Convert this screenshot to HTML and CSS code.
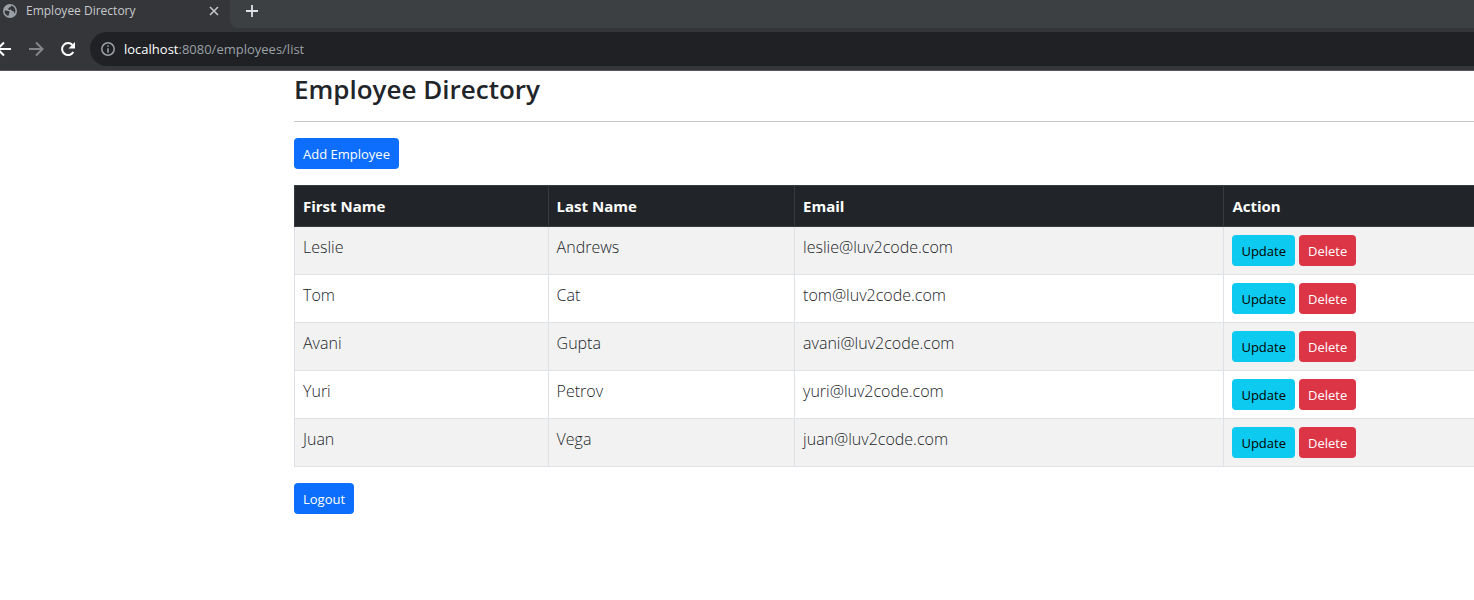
FILE: index.html
```html
<!DOCTYPE html>
<html lang="en">
<head>
<meta charset="utf-8">
<meta name="viewport" content="width=device-width, initial-scale=1">
<title>Employee Directory</title>
<link rel="stylesheet" href="styles.css">
</head>
<body>
<header class="browser">
  <div class="tabstrip">
    <div class="tab">
      <svg class="favicon" width="14" height="14" viewBox="0 0 14 14" aria-hidden="true"><circle cx="7" cy="7" r="7" fill="#9aa0a6"/><path d="M1.6 6.6 C3 6.8 5.4 6.6 6.4 7.6 C7 8.5 6 9 6 10 C6 10.8 5.4 11 5.4 12.1 C2.900 11.500 1.400 9.400 1.600 6.600Z M8 1.500 C8.600 2.600 7.600 3 6.600 3.200 C5.600 3.400 6 4.600 5 4.800 C4.600 5.500 6.200 5.300 7.600 5.500 C8.600 5.800 8.600 7.200 9.800 7.300 C11 7.300 11.300 8.200 11.600 9.700 C13.500 6.500 12 2.200 8 1.500Z" fill="#35363a"/></svg>
      <span class="tab-title">Employee Directory</span>
      <button class="icon-button" type="button" aria-label="Close tab"><svg width="10" height="10" viewBox="0 0 10 10"><path d="M1 1 9 9M9 1 1 9" stroke="#c8cacd" stroke-width="1.500"/></svg></button>
    </div>
    <div class="strip-rest">
      <button class="icon-button" type="button" aria-label="New tab"><svg width="12" height="12" viewBox="0 0 12 12"><path d="M6 0V12M0 6H12" stroke="#dee1e6" stroke-width="1.800"/></svg></button>
    </div>
  </div>
  <div class="toolbar">
    <button class="icon-button back" type="button" aria-label="Back"><svg width="16" height="16" viewBox="0 0 16 16"><path d="M15 8H2M8 1.500 1.500 8 8 14.500" fill="none" stroke="#fff" stroke-width="2"/></svg></button>
    <button class="icon-button" type="button" aria-label="Forward"><svg width="16" height="16" viewBox="0 0 16 16"><path d="M1 8H14M8 1.500 14.500 8 8 14.500" fill="none" stroke="#85868a" stroke-width="2"/></svg></button>
    <button class="icon-button" type="button" aria-label="Reload"><svg width="16" height="16" viewBox="0 0 16 16"><path d="M13.300 11A6 6 0 1 1 12.500 4" fill="none" stroke="#fff" stroke-width="2"/><path d="M15 1V7.500H8.500Z" fill="#fff"/></svg></button>
    <div class="address">
      <svg width="14" height="14" viewBox="0 0 14 14" aria-hidden="true"><circle cx="7" cy="7" r="6.200" fill="none" stroke="#9aa0a6" stroke-width="1.500"/><path d="M7 3.200V4.800M7 6.200V10.800" stroke="#9aa0a6" stroke-width="1.600"/></svg>
      <span class="url"><span class="host">localhost</span>:8080/employees/list</span>
    </div>
  </div>
</header>
<main class="page">
  <h1 class="title">Employee Directory</h1>
  <hr class="rule">
  <a class="btn btn-primary" href="#add">Add Employee</a>
  <table class="employees">
    <colgroup><col class="col-first"><col class="col-last"><col class="col-email"><col></colgroup>
    <thead><tr><th scope="col">First Name</th><th scope="col">Last Name</th><th scope="col">Email</th><th scope="col">Action</th></tr></thead>
    <tbody>
      <tr><td>Leslie</td><td>Andrews</td><td>leslie@luv2code.com</td><td><div class="actions"><a class="btn btn-info" href="#update">Update</a><a class="btn btn-danger" href="#delete">Delete</a></div></td></tr>
      <tr><td>Tom</td><td>Cat</td><td>tom@luv2code.com</td><td><div class="actions"><a class="btn btn-info" href="#update">Update</a><a class="btn btn-danger" href="#delete">Delete</a></div></td></tr>
      <tr><td>Avani</td><td>Gupta</td><td>avani@luv2code.com</td><td><div class="actions"><a class="btn btn-info" href="#update">Update</a><a class="btn btn-danger" href="#delete">Delete</a></div></td></tr>
      <tr><td>Yuri</td><td>Petrov</td><td>yuri@luv2code.com</td><td><div class="actions"><a class="btn btn-info" href="#update">Update</a><a class="btn btn-danger" href="#delete">Delete</a></div></td></tr>
      <tr><td>Juan</td><td>Vega</td><td>juan@luv2code.com</td><td><div class="actions"><a class="btn btn-info" href="#update">Update</a><a class="btn btn-danger" href="#delete">Delete</a></div></td></tr>
    </tbody>
  </table>
  <button class="btn btn-primary" type="button">Logout</button>
</main>
</body>
</html>
```

FILE: styles.css
```css
* { box-sizing: border-box; }

body {
  margin: 0;
  background: #fff;
  color: #212529;
  font: 15px/24px "Segoe UI", "Open Sans", "Noto Sans", sans-serif;
}

/* Browser bar */
.browser {
  background: #35363a;
  border-bottom: 1px solid #5b565e;
}

.tabstrip {
  display: flex;
  height: 28px;
}

.tab {
  display: flex;
  align-items: center;
  width: 230px;
  padding: 0 11px 6px 3px;
}

.tab-title {
  flex: 1;
  margin-left: 9px;
  color: #c8cacd;
  font-size: 12px;
  line-height: 16px;
}

.icon-button {
  display: flex;
  padding: 0;
  border: 0;
  background: none;
}

.strip-rest {
  display: flex;
  flex: 1;
  align-items: flex-start;
  padding: 5px 16px;
  border-bottom-left-radius: 8px;
  background: #3c4043;
}

.toolbar {
  display: flex;
  align-items: center;
  gap: 16px;
  padding: 4px 0;
}

.back { margin-left: -4px; }

.address {
  display: flex;
  flex: 1;
  align-items: center;
  gap: 9px;
  height: 34px;
  margin-left: -2px;
  padding-left: 11px;
  border-radius: 17px 0 0 17px;
  background: #202124;
}

.url {
  color: #9aa0a6;
  font-size: 13px;
}

.host { color: #fff; }

/* Page */
.page { padding: 2px 0 0 294px; }

.title {
  margin: 0;
  font-size: 26px;
  font-weight: 600;
  line-height: 32px;
}

.rule {
  margin: 16px 0;
  border: 0;
  border-top: 1px solid #c8c8ca;
}

.btn {
  display: block;
  width: fit-content;
  padding: 5px 8px 3px;
  border: 1px solid transparent;
  border-radius: 4px;
  font: inherit;
  font-size: 13px;
  line-height: 21px;
  text-decoration: none;
}

.btn-primary { background: #0d6efd; color: #fff; }
.btn-info { background: #0dcaf0; color: #000; }
.btn-danger { background: #dc3545; color: #fff; }

.employees {
  width: 100%;
  margin: 16px 0;
  border-collapse: collapse;
  table-layout: fixed;
}

.col-first { width: 21.5%; }
.col-last { width: 20.9%; }
.col-email { width: 36.4%; }

.employees th,
.employees td {
  padding: 8px;
  border: 1px solid #dee2e6;
  border-right: 0;
  text-align: left;
  vertical-align: top;
}

.employees td {
  font-size: 16px;
  font-weight: 300;
}

.employees th {
  border-color: #373b3e;
  background: #212529;
  color: #fff;
  font-weight: 700;
}

.employees tbody tr:nth-child(odd) { background: #f2f2f2; }

.actions {
  display: flex;
  gap: 4px;
  font-weight: 400;
}
```
